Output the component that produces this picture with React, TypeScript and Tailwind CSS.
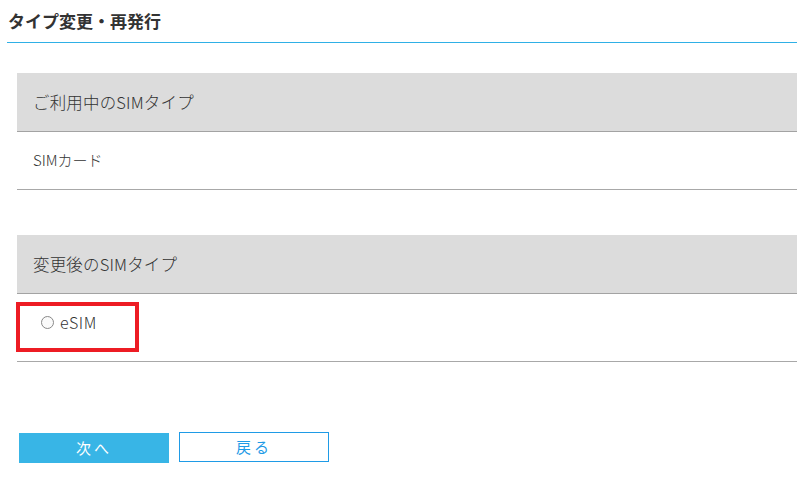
import React from 'react';

const font = { fontFamily: '"Noto Sans CJK JP", "Noto Sans", sans-serif' };

function Section({ title, rowHeight, children }: { title: string; rowHeight: string; children: React.ReactNode }) {
  return (
    <div className="ml-[17px]">
      <div className="h-[59px] bg-[#dcdcdc] border-b border-[#a3a3a3] flex items-center pl-4 text-[16.5px] text-[#333] font-light tracking-[0.01em]">
        {title}
      </div>
      <div className={`${rowHeight} border-b border-[#a8a8a8] flex items-center pl-4 text-[15px] text-[#333] font-light`}>
        {children}
      </div>
    </div>
  );
}

export default function App() {
  return (
    <div className="w-[797px] h-[487px] bg-white" style={font}>
      <div className="pl-[7px] pt-[8px]">
        <h1 className="pl-[1px] h-[26px] text-[17px] font-bold text-[#333] leading-[26px]">タイプ変更・再発行</h1>
        <div className="mt-[8px] h-px bg-[#2fb0e6]" />
      </div>
      <div className="mt-[30px]">
        <Section title="ご利用中のSIMタイプ" rowHeight="h-[58px]">SIMカード</Section>
      </div>
      <div className="mt-[45px]">
        <Section title="変更後のSIMタイプ" rowHeight="h-[68px]">
          <div className="relative flex items-center gap-[6px] pl-2 -mt-[11px]">
            <span className="w-[13px] h-[13px] rounded-full border border-[#888] bg-[#fafafa]" />
            <span className="text-[16px] tracking-[0.04em]">eSIM</span>
            <div className="absolute left-[-17px] top-[-8px] w-[123px] h-[50px] border-4 border-[#ed1c24]" />
          </div>
        </Section>
      </div>
      <div className="mt-[71px] ml-[19px] flex gap-[10px]">
        <button className="w-[150px] h-[30px] bg-[#38b5e6] text-white text-[15px] tracking-[0.2em]">次へ</button>
        <button className="w-[150px] h-[30px] -mt-px border border-[#1f9be6] text-[#1f9be6] text-[15px] tracking-[0.2em]">戻る</button>
      </div>
    </div>
  );
}
